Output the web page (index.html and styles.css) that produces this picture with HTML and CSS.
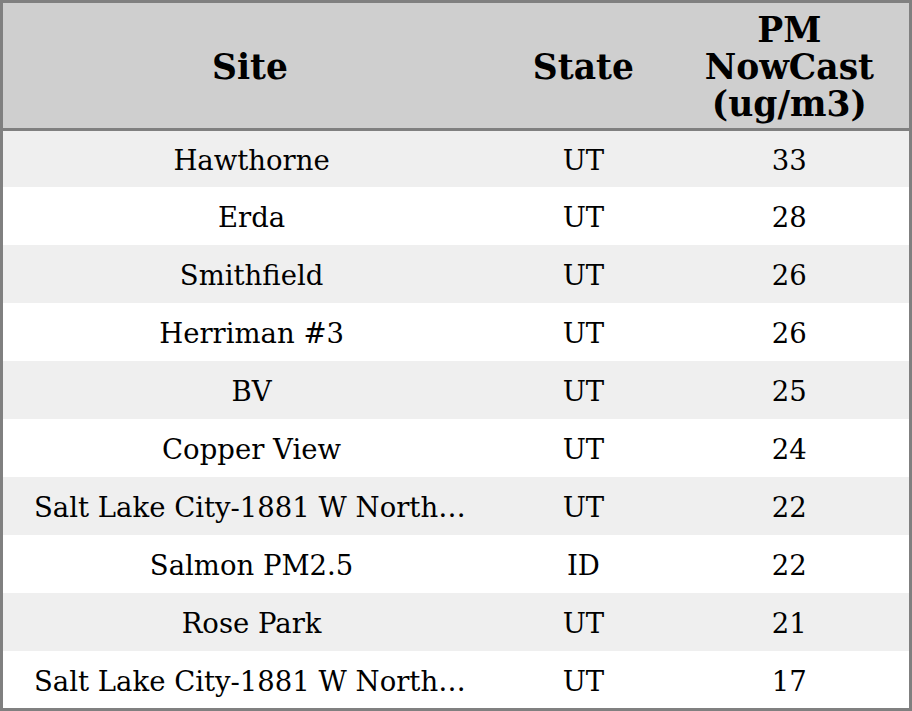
FILE: index.html
```html
<!DOCTYPE html>
<html>
<head>
<meta charset="utf-8">
<link rel="stylesheet" href="styles.css">
</head>
<body>
<table class="grid">
  <colgroup>
    <col class="c-site">
    <col class="c-state">
    <col class="c-pm">
  </colgroup>
  <thead>
    <tr>
      <th>Site</th>
      <th>State</th>
      <th>PM<br>NowCast<br>(ug/m3)</th>
    </tr>
  </thead>
  <tbody>
    <tr><td><div class="clip">Hawthorne</div></td><td>UT</td><td>33</td></tr>
    <tr><td><div class="clip">Erda</div></td><td>UT</td><td>28</td></tr>
    <tr><td><div class="clip">Smithfield</div></td><td>UT</td><td>26</td></tr>
    <tr><td><div class="clip">Herriman #3</div></td><td>UT</td><td>26</td></tr>
    <tr><td><div class="clip">BV</div></td><td>UT</td><td>25</td></tr>
    <tr><td><div class="clip">Copper View</div></td><td>UT</td><td>24</td></tr>
    <tr><td><div class="clip">Salt Lake City-1881 W Northtemple</div></td><td>UT</td><td>22</td></tr>
    <tr><td><div class="clip">Salmon PM2.5</div></td><td>ID</td><td>22</td></tr>
    <tr><td><div class="clip">Rose Park</div></td><td>UT</td><td>21</td></tr>
    <tr><td><div class="clip">Salt Lake City-1881 W Northtemple</div></td><td>UT</td><td>17</td></tr>
  </tbody>
</table>
</body>
</html>
```
FILE: styles.css
```css
html, body {
  margin: 0;
  padding: 0;
  background: #ffffff;
}
.grid {
  width: 912px;
  border-collapse: collapse;
  table-layout: fixed;
  border: 3px solid #808080;
  font-family: "DejaVu Serif", serif;
  color: #000;
}
.c-site { width: 494px; }
.c-state { width: 172px; }
.c-pm { width: 240px; }
.grid th {
  background: #cfcfcf;
  font-size: 34.5px;
  font-weight: bold;
  line-height: 37px;
  height: 121px;
  padding: 4px 0 0;
  text-align: center;
  vertical-align: middle;
  border-bottom: 3px solid #808080;
}
.grid td {
  font-size: 27.5px;
  height: 56px;
  padding: 2px 0 0;
  text-align: center;
  vertical-align: middle;
}
.grid tbody tr:first-child td {
  height: 54px;
  padding-top: 2px;
}
.grid tbody tr:last-child td {
  height: 55px;
  padding-top: 2px;
}
.grid tbody tr:nth-child(odd) td { background: #efefef; }
.grid tbody tr:nth-child(even) td { background: #ffffff; }
.clip {
  padding: 0 28px 0 31px;
  white-space: nowrap;
  overflow: hidden;
  text-overflow: ellipsis;
}
```
